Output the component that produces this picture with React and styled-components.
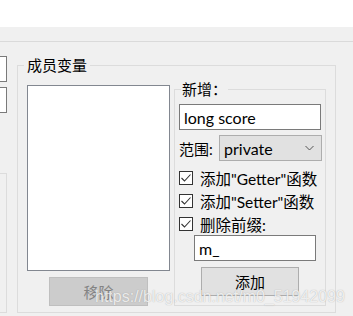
import React from "react";
import styled, { createGlobalStyle } from "styled-components";

const Global = createGlobalStyle`
  html, body {
    margin: 0;
    padding: 0;
    background: #ffffff;
  }
  body {
    font-family: Lato, "Noto Sans CJK SC", sans-serif;
    font-size: 15px;
    color: #000;
  }
`;

const Page = styled.div`
  width: 353px;
  height: 316px;
  overflow: hidden;
  display: flex;
  flex-direction: column;
`;

const Top = styled.div`
  height: 27px;
  background: #ffffff;
`;

const Panel = styled.div`
  position: relative;
  flex: 1;
  background: #f0f0f0;
  padding-top: 14px;
  box-sizing: border-box;
  overflow: hidden;
`;

const TabLine = styled.div`
  height: 1px;
  background: #dadada;
`;

const Body = styled.div`
  display: flex;
  align-items: flex-start;
`;

const LeftStub = styled.div`
  width: 7px;
  display: flex;
  flex-direction: column;
  padding-top: 14px;
  gap: 5px;
`;

const StubInput = styled.div`
  height: 26px;
  box-sizing: border-box;
  background: #fff;
  border: 1px solid #7a7a7a;
  border-left: none;
`;

const StubGroup = styled.div`
  margin-top: 55px;
  height: 140px;
  box-sizing: border-box;
  border: 1px solid #dcdcdc;
  border-left: none;
`;

const Group = styled.div`
  position: relative;
  box-sizing: border-box;
  border: 1px solid #dcdcdc;
  width: ${(p) => p.$w}px;
  height: ${(p) => p.$h}px;
  margin-top: ${(p) => p.$top || 0}px;
  margin-left: ${(p) => p.$left || 0}px;
  padding: ${(p) => p.$pad};
`;

const Legend = styled.span`
  position: absolute;
  top: -10px;
  left: ${(p) => p.$x}px;
  padding: 0 ${(p) => p.$px}px;
  background: #f0f0f0;
  line-height: 18px;
  font-size: 15px;
`;

const Columns = styled.div`
  display: flex;
  align-items: flex-start;
  gap: 4px;
`;

const LeftCol = styled.div`
  display: flex;
  flex-direction: column;
`;

const ListBox = styled.div`
  width: 143px;
  height: 186px;
  box-sizing: border-box;
  background: #fff;
  border: 1px solid #828790;
`;

const Button = styled.div`
  box-sizing: border-box;
  width: ${(p) => p.$w}px;
  height: 29px;
  margin-top: 6px;
  margin-left: ${(p) => p.$left}px;
  display: flex;
  align-items: center;
  justify-content: center;
  background: ${(p) => (p.$disabled ? "#cccccc" : "#e1e1e1")};
  border: 1px solid ${(p) => (p.$disabled ? "#bfbfbf" : "#adadad")};
  color: ${(p) => (p.$disabled ? "#838383" : "#000")};
  font-size: 15px;
`;

const Stack = styled.div`
  display: flex;
  flex-direction: column;
`;

const TextBox = styled.div`
  box-sizing: border-box;
  width: ${(p) => p.$w}px;
  height: 26px;
  margin-left: ${(p) => p.$left || 0}px;
  background: #fff;
  border: 1px solid #7a7a7a;
  padding-left: 4px;
  display: flex;
  align-items: center;
  font-size: 16px;
`;

const Row = styled.div`
  display: flex;
  align-items: center;
  height: ${(p) => p.$h}px;
  margin-top: ${(p) => p.$top || 0}px;
`;

const Label = styled.span`
  width: 40px;
  font-size: 15px;
`;

const Select = styled.div`
  box-sizing: border-box;
  width: 103px;
  height: 26px;
  background: #e1e1e1;
  border: 1px solid #adadad;
  display: flex;
  align-items: center;
  justify-content: space-between;
  padding: 0 7px 0 4px;
  font-size: 16px;
`;

const Box = styled.div`
  box-sizing: border-box;
  width: 14px;
  height: 14px;
  background: #fff;
  border: 1px solid #333;
  margin-right: 7px;
  display: flex;
  align-items: center;
  justify-content: center;
`;

const CheckText = styled.span`
  font-size: 15.5px;
`;

const Watermark = styled.div`
  position: absolute;
  left: 95px;
  top: 261px;
  font-family: "Liberation Sans", Arial, sans-serif;
  font-size: 16px;
  line-height: 18px;
  color: rgba(255, 255, 255, 0.8);
  text-shadow: 0 0 1px rgba(110, 110, 110, 0.55);
  white-space: nowrap;
`;

const Tick = () => (
  <svg width="12" height="12" viewBox="0 0 12 12">
    <polyline points="1.5,6 4.5,9 10.5,2.5" fill="none" stroke="#333" strokeWidth="1.1" />
  </svg>
);

const Chevron = () => (
  <svg width="9" height="6" viewBox="0 0 9 6">
    <polyline points="0.5,1 4.5,5 8.5,1" fill="none" stroke="#555" strokeWidth="1" />
  </svg>
);

function Check({ children }) {
  return (
    <Row $h={23}>
      <Box>
        <Tick />
      </Box>
      <CheckText>{children}</CheckText>
    </Row>
  );
}

export default function App() {
  return (
    <Page>
      <Global />
      <Top />
      <Panel>
        <TabLine />
        <Body>
          <LeftStub>
            <StubInput />
            <StubInput />
            <StubGroup />
          </LeftStub>
          <Group $w={319} $h={248} $top={23} $left={10} $pad="19px 0 0 9px">
            <Legend $x={6} $px={3}>成员变量</Legend>
            <Columns>
              <LeftCol>
                <ListBox />
                <Button $w={99} $left={22} $disabled>
                  移除
                </Button>
              </LeftCol>
              <Group $w={152} $h={217} $top={4} $pad="14px 0 0 4px">
                <Legend $x={6} $px={1}>新增：</Legend>
                <Stack>
                  <TextBox $w={142}>long score</TextBox>
                  <Row $h={26} $top={5}>
                    <Label>范围:</Label>
                    <Select>
                      <span>private</span>
                      <Chevron />
                    </Select>
                  </Row>
                  <Row $h={5} />
                  <Check>添加"Getter"函数</Check>
                  <Check>添加"Setter"函数</Check>
                  <Check>删除前缀:</Check>
                  <TextBox $w={122} $left={15}>m_</TextBox>
                  <Button $w={98} $left={22}>
                    添加
                  </Button>
                </Stack>
              </Group>
            </Columns>
          </Group>
        </Body>
        <Watermark>https://blog.csdn.net/m0_51942099</Watermark>
      </Panel>
    </Page>
  );
}
